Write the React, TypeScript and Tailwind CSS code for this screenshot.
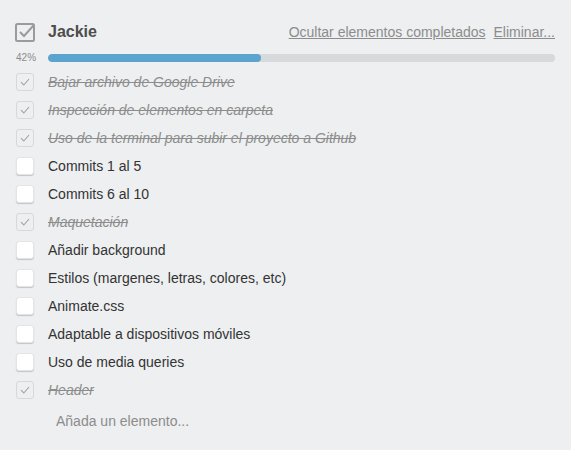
import { useState } from "react";

type Item = { text: string; done: boolean };

const initialItems: Item[] = [
    { text: "Bajar archivo de Google Drive", done: true },
    { text: "Inspección de elementos en carpeta", done: true },
    { text: "Uso de la terminal para subir el proyecto a Github", done: true },
    { text: "Commits 1 al 5", done: false },
    { text: "Commits 6 al 10", done: false },
    { text: "Maquetación", done: true },
    { text: "Añadir background", done: false },
    { text: "Estilos (margenes, letras, colores, etc)", done: false },
    { text: "Animate.css", done: false },
    { text: "Adaptable a dispositivos móviles", done: false },
    { text: "Uso de media queries", done: false },
    { text: "Header", done: true },
];

function Check({ done, onClick }: { done: boolean; onClick: () => void }) {
    return (
        <button
            onClick={onClick}
            className={
                done
                    ? "w-[18px] h-[18px] shrink-0 rounded-[3px] border border-[#d6d8da] bg-transparent flex items-center justify-center"
                    : "w-[18px] h-[18px] shrink-0 rounded-[3px] bg-white shadow-[0_1px_1px_rgba(0,0,0,0.18)] border border-[#e2e4e6]"
            }
        >
            {done && (
                <svg width="10" height="8" viewBox="0 0 10 8" fill="none">
                    <path d="M1 4.2 L3.8 7 L9 1" stroke="#a3a3a3" strokeWidth="1.1" />
                </svg>
            )}
        </button>
    );
}

export default function App() {
    const [items, setItems] = useState(initialItems);
    const doneCount = items.filter((i) => i.done).length;
    const pct = Math.round((doneCount / items.length) * 100);

    function toggle(idx: number) {
        setItems(items.map((it, i) => (i === idx ? { ...it, done: !it.done } : it)));
    }

    return (
        <div className="w-[571px] h-[450px] bg-[#edeff0] font-['Helvetica_Neue',Arial,'Liberation_Sans',sans-serif] text-[#333]">
            <div className="pl-[15px] pr-[15px] pt-[22px]">
                {/* header */}
                <div className="flex items-center h-[20px]">
                    <svg width="20" height="19" viewBox="0 0 20 19" fill="none" className="shrink-0">
                        <rect x="1" y="1" width="18" height="17" rx="1.5" stroke="#9b9b9b" strokeWidth="2" />
                        <path d="M5 9 L9 13 L18.5 2.5" stroke="#9b9b9b" strokeWidth="2" />
                    </svg>
                    <div className="ml-[13px] text-[16px] font-bold text-[#4d4d4d] leading-none">Jackie</div>
                    <div className="ml-auto flex gap-[8px] text-[14px] text-[#8c8c8c] underline leading-none pr-[1px]">
                        <span>Ocultar elementos completados</span>
                        <span>Eliminar...</span>
                    </div>
                </div>

                {/* progress */}
                <div className="flex items-center mt-[11px] h-[10px]">
                    <div className="w-[33px] text-[10px] text-[#8c8c8c] leading-none pl-[1px]">{pct}%</div>
                    <div className="flex-1 h-[8px] rounded-[4px] bg-[#d6dadc] overflow-hidden mr-[1px]">
                        <div className="h-full bg-[#5ba4cf] rounded-[4px]" style={{ width: `${pct}%` }} />
                    </div>
                </div>

                {/* items */}
                <div className="mt-[5px]">
                    {items.map((it, i) => (
                        <div key={i} className="flex items-center h-[28px] pl-[1px]">
                            <Check done={it.done} onClick={() => toggle(i)} />
                            <span
                                className={
                                    it.done
                                        ? "ml-[14px] text-[14px] italic line-through text-[#8c8c8c]"
                                        : "ml-[14px] text-[14px] text-[#333]"
                                }
                            >
                                {it.text}
                            </span>
                        </div>
                    ))}
                </div>

                <div className="mt-[7px] pl-[41px] text-[14px] text-[#8c8c8c]">Añada un elemento...</div>
            </div>
        </div>
    );
}
